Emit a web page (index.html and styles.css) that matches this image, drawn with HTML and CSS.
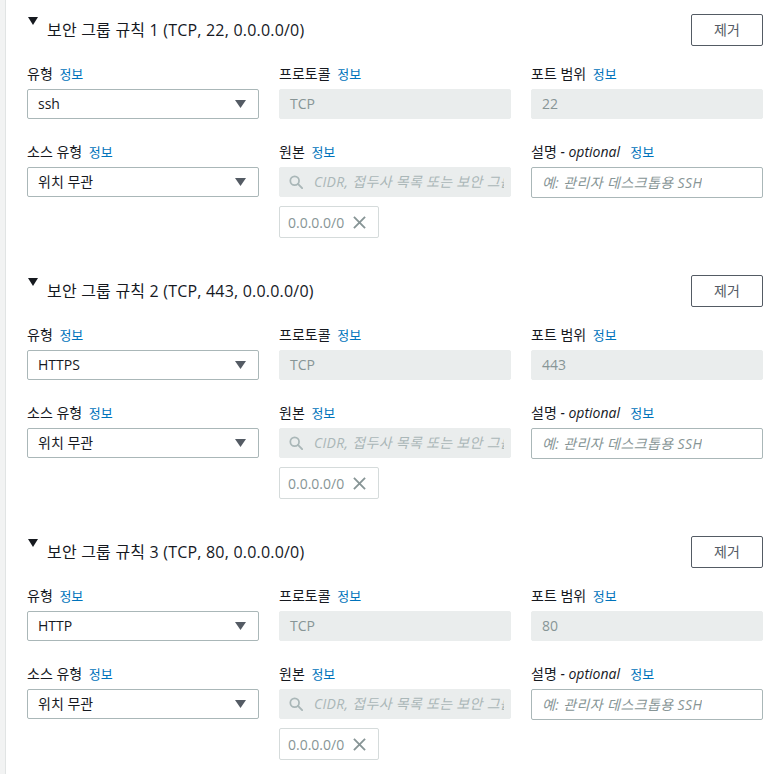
FILE: index.html
```html
<!DOCTYPE html>
<html lang="ko">
<head>
<meta charset="utf-8">
<title>보안 그룹 규칙</title>
<link rel="stylesheet" href="styles.css">
</head>
<body>
<div class="page">
  <div class="rail"></div>
  <main class="rules">

    <section class="rule">
      <div class="rule-head">
        <svg class="expand" viewBox="0 0 10 8" width="10" height="8"><path d="M0 0H10L5 8Z"/></svg>
        <h3 class="rule-title">보안 그룹 규칙 1 (TCP, 22, 0.0.0.0/0)</h3>
        <button class="btn">제거</button>
      </div>
      <div class="grid">
        <div class="field">
          <div class="label">유형 <a class="info">정보</a></div>
          <div class="select"><span>ssh</span><svg class="caret" viewBox="0 0 11 8" width="11" height="8"><path d="M0 0H11L5.5 8Z"/></svg></div>
        </div>
        <div class="field">
          <div class="label">프로토콜 <a class="info">정보</a></div>
          <div class="input disabled">TCP</div>
        </div>
        <div class="field">
          <div class="label">포트 범위 <a class="info">정보</a></div>
          <div class="input disabled">22</div>
        </div>
        <div class="field">
          <div class="label">소스 유형 <a class="info">정보</a></div>
          <div class="select"><span>위치 무관</span><svg class="caret" viewBox="0 0 11 8" width="11" height="8"><path d="M0 0H11L5.5 8Z"/></svg></div>
        </div>
        <div class="field">
          <div class="label">원본 <a class="info">정보</a></div>
          <div class="input disabled search">
            <svg class="search-icon" viewBox="0 0 16 16" width="14" height="14"><circle cx="6.5" cy="6.5" r="5" fill="none" stroke="currentColor" stroke-width="2"/><path d="M10.2 10.2L15 15" stroke="currentColor" stroke-width="2.2" stroke-linecap="round"/></svg>
            <span class="ph">CIDR, 접두사 목록 또는 보안 그룹</span>
          </div>
          <div class="token"><span>0.0.0.0/0</span><svg class="x" viewBox="0 0 14 14" width="13" height="13"><path d="M1 1L13 13M13 1L1 13" stroke="currentColor" stroke-width="2"/></svg></div>
        </div>
        <div class="field">
          <div class="label">설명 <i>- optional</i>&nbsp; <a class="info">정보</a></div>
          <div class="input"><span class="ph dark">예: 관리자 데스크톱용 SSH</span></div>
        </div>
      </div>
    </section>

    <section class="rule">
      <div class="rule-head">
        <svg class="expand" viewBox="0 0 10 8" width="10" height="8"><path d="M0 0H10L5 8Z"/></svg>
        <h3 class="rule-title">보안 그룹 규칙 2 (TCP, 443, 0.0.0.0/0)</h3>
        <button class="btn">제거</button>
      </div>
      <div class="grid">
        <div class="field">
          <div class="label">유형 <a class="info">정보</a></div>
          <div class="select"><span>HTTPS</span><svg class="caret" viewBox="0 0 11 8" width="11" height="8"><path d="M0 0H11L5.5 8Z"/></svg></div>
        </div>
        <div class="field">
          <div class="label">프로토콜 <a class="info">정보</a></div>
          <div class="input disabled">TCP</div>
        </div>
        <div class="field">
          <div class="label">포트 범위 <a class="info">정보</a></div>
          <div class="input disabled">443</div>
        </div>
        <div class="field">
          <div class="label">소스 유형 <a class="info">정보</a></div>
          <div class="select"><span>위치 무관</span><svg class="caret" viewBox="0 0 11 8" width="11" height="8"><path d="M0 0H11L5.5 8Z"/></svg></div>
        </div>
        <div class="field">
          <div class="label">원본 <a class="info">정보</a></div>
          <div class="input disabled search">
            <svg class="search-icon" viewBox="0 0 16 16" width="14" height="14"><circle cx="6.5" cy="6.5" r="5" fill="none" stroke="currentColor" stroke-width="2"/><path d="M10.2 10.2L15 15" stroke="currentColor" stroke-width="2.2" stroke-linecap="round"/></svg>
            <span class="ph">CIDR, 접두사 목록 또는 보안 그룹</span>
          </div>
          <div class="token"><span>0.0.0.0/0</span><svg class="x" viewBox="0 0 14 14" width="13" height="13"><path d="M1 1L13 13M13 1L1 13" stroke="currentColor" stroke-width="2"/></svg></div>
        </div>
        <div class="field">
          <div class="label">설명 <i>- optional</i>&nbsp; <a class="info">정보</a></div>
          <div class="input"><span class="ph dark">예: 관리자 데스크톱용 SSH</span></div>
        </div>
      </div>
    </section>

    <section class="rule">
      <div class="rule-head">
        <svg class="expand" viewBox="0 0 10 8" width="10" height="8"><path d="M0 0H10L5 8Z"/></svg>
        <h3 class="rule-title">보안 그룹 규칙 3 (TCP, 80, 0.0.0.0/0)</h3>
        <button class="btn">제거</button>
      </div>
      <div class="grid">
        <div class="field">
          <div class="label">유형 <a class="info">정보</a></div>
          <div class="select"><span>HTTP</span><svg class="caret" viewBox="0 0 11 8" width="11" height="8"><path d="M0 0H11L5.5 8Z"/></svg></div>
        </div>
        <div class="field">
          <div class="label">프로토콜 <a class="info">정보</a></div>
          <div class="input disabled">TCP</div>
        </div>
        <div class="field">
          <div class="label">포트 범위 <a class="info">정보</a></div>
          <div class="input disabled">80</div>
        </div>
        <div class="field">
          <div class="label">소스 유형 <a class="info">정보</a></div>
          <div class="select"><span>위치 무관</span><svg class="caret" viewBox="0 0 11 8" width="11" height="8"><path d="M0 0H11L5.5 8Z"/></svg></div>
        </div>
        <div class="field">
          <div class="label">원본 <a class="info">정보</a></div>
          <div class="input disabled search">
            <svg class="search-icon" viewBox="0 0 16 16" width="14" height="14"><circle cx="6.5" cy="6.5" r="5" fill="none" stroke="currentColor" stroke-width="2"/><path d="M10.2 10.2L15 15" stroke="currentColor" stroke-width="2.2" stroke-linecap="round"/></svg>
            <span class="ph">CIDR, 접두사 목록 또는 보안 그룹</span>
          </div>
          <div class="token"><span>0.0.0.0/0</span><svg class="x" viewBox="0 0 14 14" width="13" height="13"><path d="M1 1L13 13M13 1L1 13" stroke="currentColor" stroke-width="2"/></svg></div>
        </div>
        <div class="field">
          <div class="label">설명 <i>- optional</i>&nbsp; <a class="info">정보</a></div>
          <div class="input"><span class="ph dark">예: 관리자 데스크톱용 SSH</span></div>
        </div>
      </div>
    </section>

  </main>
</div>
</body>
</html>
```

FILE: styles.css
```css
* { box-sizing: border-box; }

html, body {
  margin: 0;
  padding: 0;
  background: #ffffff;
}

body {
  font-family: "Open Sans", "Noto Sans CJK KR", sans-serif;
  font-size: 14px;
  color: #16191f;
}

.page {
  display: flex;
  min-height: 774px;
}

.rail {
  width: 6px;
  flex: none;
  background: #f2f3f3;
  border-right: 1px solid #e1e4e4;
}

.rules {
  flex: 1;
  padding: 0 20px 0 21px;
}

.rule {
  padding: 14px 0 23px;
}

.rule-head {
  display: flex;
  align-items: flex-start;
  height: 32px;
}

.expand {
  flex: none;
  margin: 3px 9px 0 1px;
  fill: #16191f;
}

.rule-title {
  flex: 1;
  margin: 0;
  font-size: 16px;
  font-weight: 400;
  line-height: 32px;
  letter-spacing: 0.2px;
  color: #16191f;
}

.btn {
  flex: none;
  width: 72px;
  height: 32px;
  padding: 0;
  border: 1px solid #545b64;
  border-radius: 2px;
  background: #ffffff;
  color: #545b64;
  font-family: inherit;
  font-size: 14px;
  line-height: 20px;
}

.grid {
  display: grid;
  grid-template-columns: repeat(3, 1fr);
  column-gap: 20px;
  row-gap: 23px;
  margin-top: 18px;
}

.field {
  display: flex;
  flex-direction: column;
  min-width: 0;
}

.label {
  display: flex;
  align-items: baseline;
  height: 20px;
  font-size: 14px;
  line-height: 20px;
  margin-bottom: 5px;
  white-space: pre;
}

.label i {
  font-style: italic;
}

.info {
  color: #0073bb;
  font-size: 13px;
  line-height: 20px;
  margin-left: 3px;
}

.select,
.input {
  height: 30px;
  display: flex;
  align-items: center;
  border: 1px solid #aab7b8;
  border-radius: 2px;
  padding: 0 10px;
  line-height: 20px;
  overflow: hidden;
  white-space: nowrap;
}

.select {
  justify-content: space-between;
  padding-right: 12px;
}

.caret {
  flex: none;
  fill: #545b64;
}

.input.disabled {
  background: #eaeded;
  border-color: #eaeded;
  color: #879596;
}

.input:not(.disabled) {
  height: 31px;
}

.search {
  padding-left: 9px;
  padding-right: 6px;
}

.search-icon {
  flex: none;
  color: #aab7b8;
  margin-right: 11px;
}

.ph {
  font-style: italic;
  color: #aab7b8;
  overflow: hidden;
  letter-spacing: 0.3px;
}

.ph.dark {
  color: #879596;
  letter-spacing: 0.4px;
}

.token {
  align-self: flex-start;
  margin-top: 9px;
  height: 32px;
  width: 100px;
  display: flex;
  align-items: center;
  padding: 0 9px 0 8px;
  border: 1px solid #d5dbdb;
  border-radius: 2px;
  color: #879596;
  gap: 9px;
}

.x {
  flex: none;
  color: #879596;
}
```
